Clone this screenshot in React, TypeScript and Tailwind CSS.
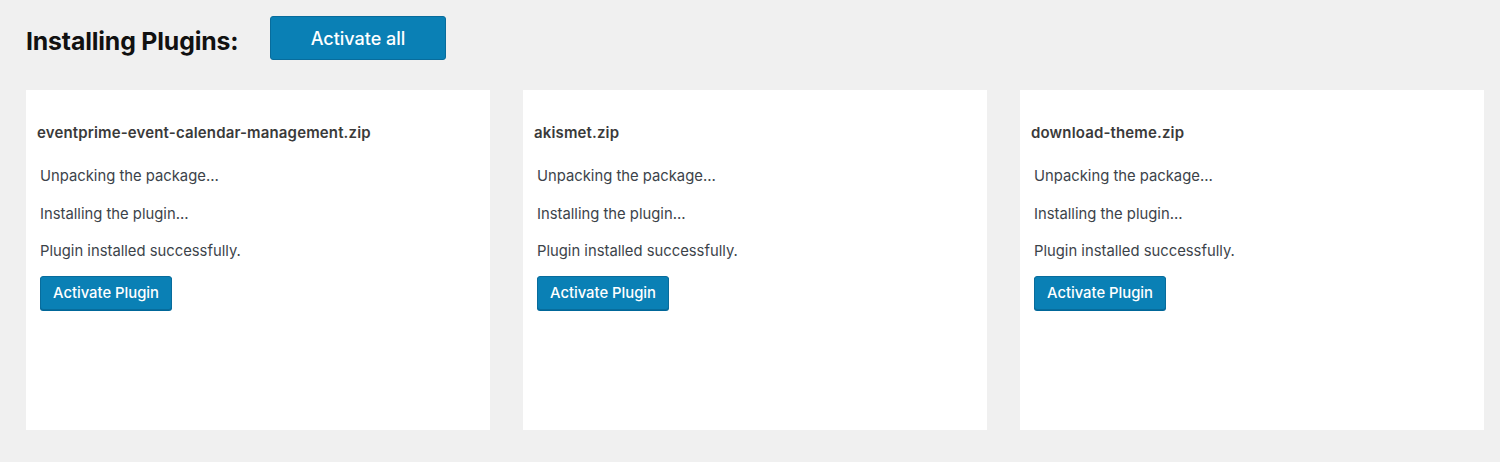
import React from "react";

const plugins = [
  "eventprime-event-calendar-management.zip",
  "akismet.zip",
  "download-theme.zip",
];

function Card({ name }: { name: string }) {
  return (
    <div className="bg-white h-[340px] pl-[11px] pt-[34px]">
      <div className="text-[15px] leading-[18px] font-semibold text-[#3a3a3a] tracking-[0.15px] h-[18px]">{name}</div>
      <div className="pl-[3px] text-[14.8px] leading-[18px] text-[#3c434a]">
        <div className="mt-[25px]">Unpacking the package…</div>
        <div className="mt-[20px]">Installing the plugin…</div>
        <div className="mt-[19px]">Plugin installed successfully.</div>
        <button className="mt-[16px] h-[34px] w-[132px] rounded-[3px] bg-[#0a80b5] border border-[#086c9c] text-white text-[14.8px] font-medium shadow-[0_1px_0_#006799]">
          Activate Plugin
        </button>
      </div>
    </div>
  );
}

export default function App() {
  return (
    <div
      className="w-[1500px] h-[462px] bg-[#f0f0f0] pl-[26px] pr-[16px] pt-[16px]"
      style={{ fontFamily: "Inter, 'Noto Sans', 'Liberation Sans', sans-serif" }}
    >
      <div className="flex items-center h-[44px]">
        <h1 className="text-[24.8px] font-bold text-[#111] tracking-[-0.15px] w-[244px] mt-[8px]">Installing Plugins:</h1>
        <button className="h-[44px] w-[176px] rounded-[3px] bg-[#0a80b5] border border-[#086c9c] text-white text-[18px] font-medium">
          Activate all
        </button>
      </div>
      <div className="grid grid-cols-3 gap-[33px] mt-[30px]">
        {plugins.map((p) => (
          <Card key={p} name={p} />
        ))}
      </div>
    </div>
  );
}
